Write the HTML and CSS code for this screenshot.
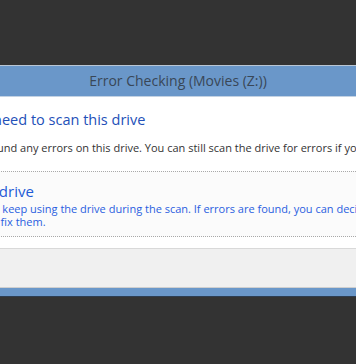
FILE: index.html
```html
<html>
	<head>
		<link rel="stylesheet" href="styles.css">
	</head>
	<body>
		<div id='desk'>
			<div class='window'>
				<div class='titlebar'>Error Checking (Movies (Z:))</div>
				<div class='content'>
					<div class='instruction'>You don't need to scan this drive</div>
					<div class='message'>We haven't found any errors on this drive. You can still scan the drive for errors if you want.</div>
					<div class='command'>
						<div class='command-title'>Scan drive</div>
						<div class='command-text'>You can keep using the drive during the scan. If errors are found, you can decide if you want to fix them.</div>
					</div>
				</div>
				<div class='footer'></div>
			</div>
		</div>
	</body>
</html>
```

FILE: styles.css
```css
body {
	margin: 0;
	background-color: #333333;
	font-family: "Open Sans", "Noto Sans", sans-serif;
	overflow: hidden;
}

#desk {
	padding-top: 65px;
	height: 299px;
}

.window {
	margin-left: -90px;
	width: 536px;
	border-top: 1px solid #b9c6d4;
	border-bottom: 1px solid #2c3d52;
	background-color: #6a97c9;
	padding-bottom: 8px;
}

.titlebar {
	height: 30px;
	line-height: 30px;
	text-align: center;
	font-size: 14px;
	color: #394757;
	border-bottom: 1px solid #c3d2e3;
}

.content {
	background-color: #ffffff;
	padding: 12px 0 11px 0;
}

.instruction {
	padding-left: 15px;
	font-size: 14.5px;
	line-height: 22px;
	color: #2350b8;
}

.message {
	padding-left: 17px;
	margin-top: 10px;
	font-size: 11px;
	line-height: 14px;
	color: #333333;
	white-space: nowrap;
}

.command {
	margin-top: 16px;
	padding: 8px 0 8px 52px;
	border-top: 1px dotted #a9a9a9;
	border-bottom: 1px dotted #a9a9a9;
	background-color: #fbfbfb;
}

.command-title {
	font-size: 15px;
	line-height: 22px;
	color: #1f5bd6;
}

.command-text {
	margin-left: -3px;
	width: 462px;
	font-size: 11px;
	line-height: 13px;
	color: #2a5ee0;
}

.footer {
	height: 38px;
	background-color: #f0f0f0;
	border-top: 1px solid #d9d9d9;
	border-bottom: 1px solid #cfcfcf;
}
```
